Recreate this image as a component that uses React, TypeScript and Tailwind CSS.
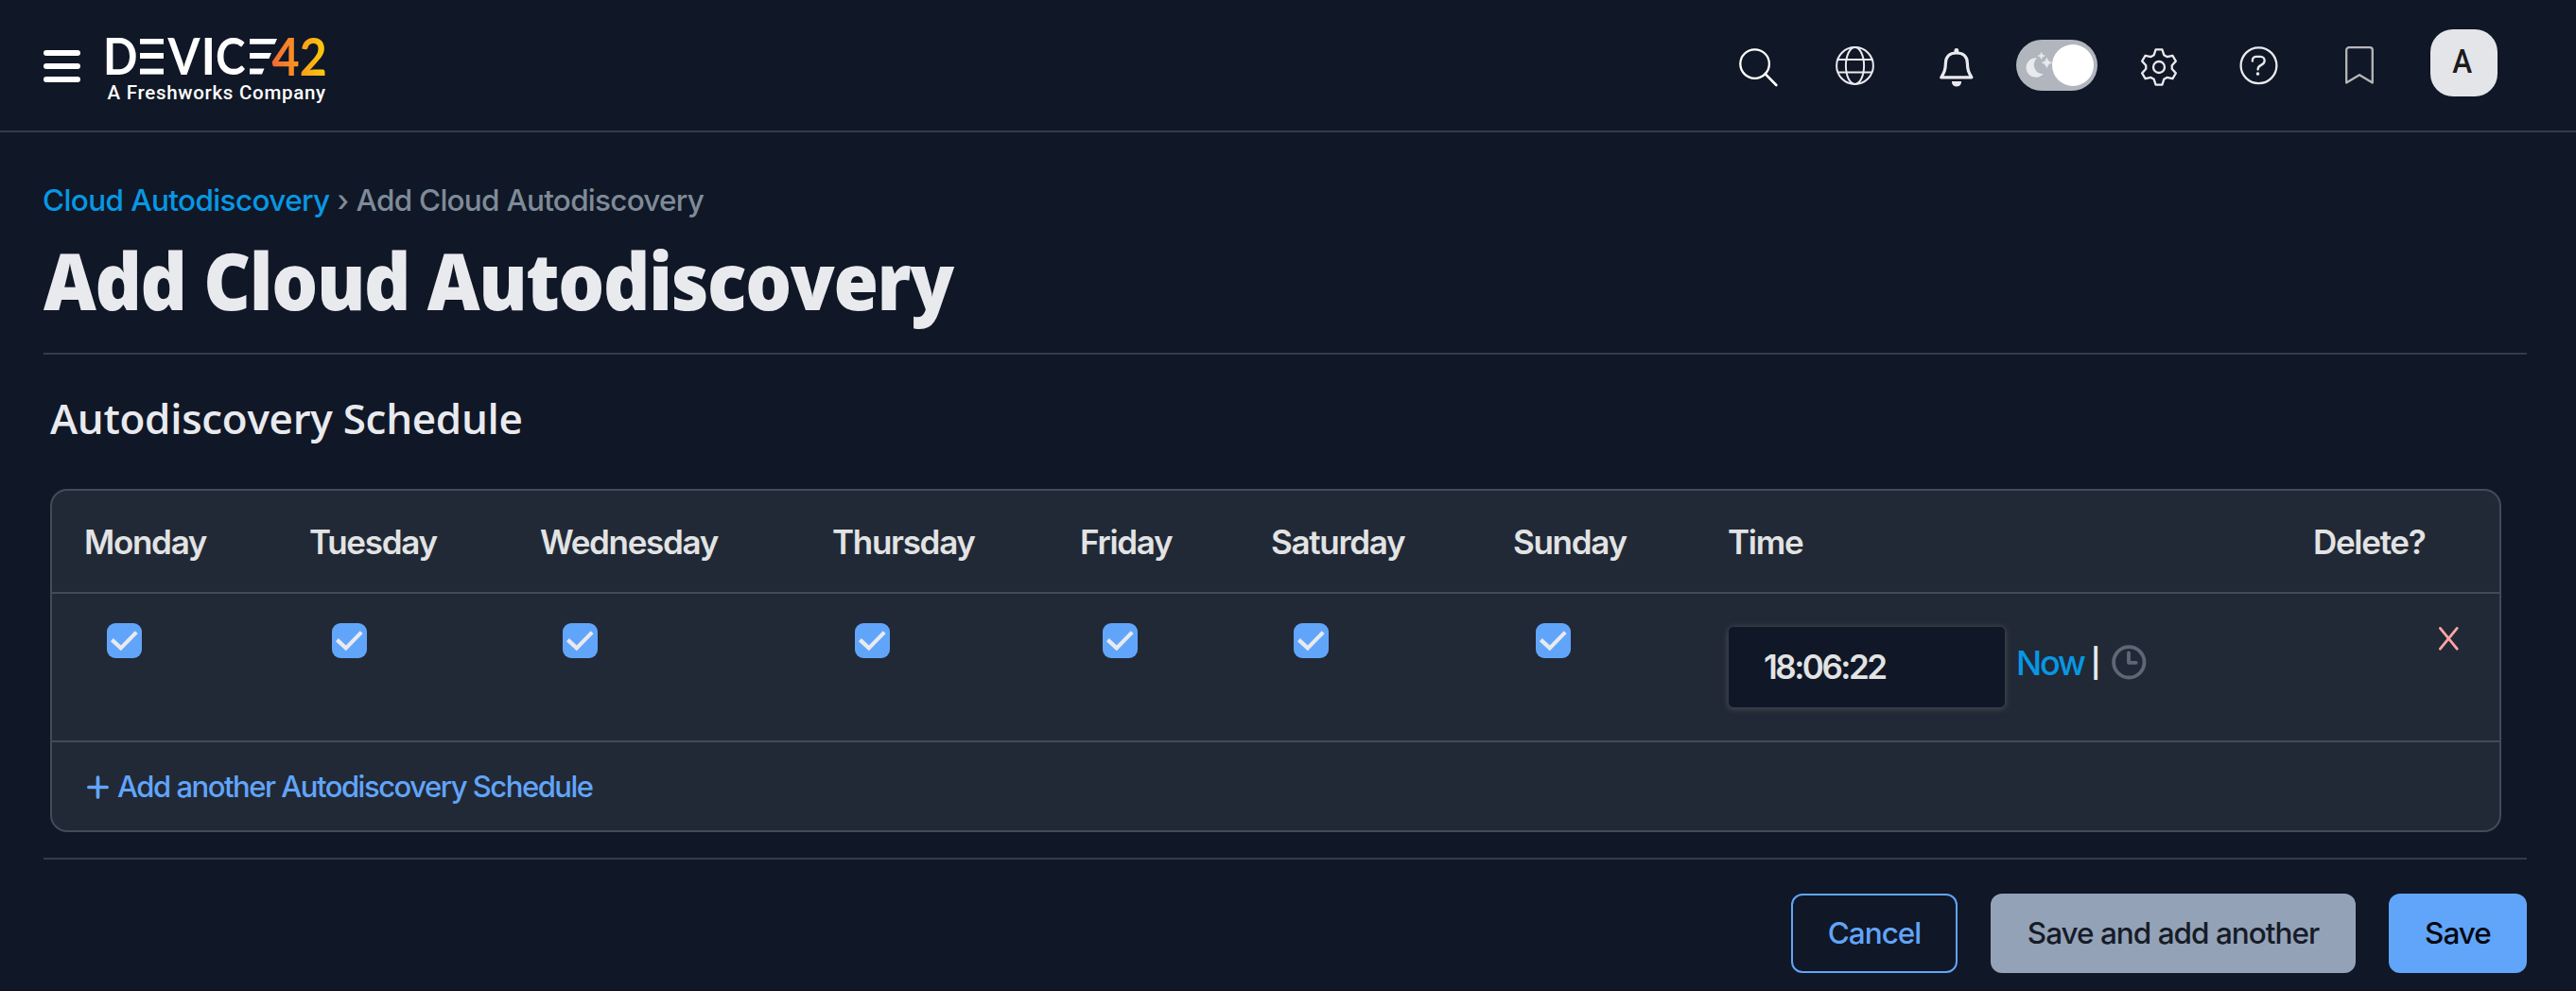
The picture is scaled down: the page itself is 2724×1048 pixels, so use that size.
import type { ReactNode } from 'react';

const DAYS = ['Monday', 'Tuesday', 'Wednesday', 'Thursday', 'Friday', 'Saturday', 'Sunday'];

const COLUMNS = 'grid grid-cols-[238px_244px_309px_262px_202px_256px_227px_619px_1fr] pl-[34px]';

function gearPath() {
  const tooth = [
    [-5.3, -12.8],
    [-3.4, -18.6],
    [3.4, -18.6],
    [5.3, -12.8],
  ];
  const points: string[] = [];
  for (let i = 0; i < 6; i++) {
    const a = (i * Math.PI) / 3;
    for (const [x, y] of tooth) {
      const px = x * Math.cos(a) - y * Math.sin(a);
      const py = x * Math.sin(a) + y * Math.cos(a);
      points.push(`${px.toFixed(2)} ${py.toFixed(2)}`);
    }
  }
  return `M${points.join('L')}Z`;
}

function Logo() {
  return (
    <svg width="234" height="72" viewBox="0 0 234 72" className="ml-7 overflow-visible" role="img" aria-label="Device42">
      <defs>
        <linearGradient id="brand" gradientUnits="userSpaceOnUse" x1="176" y1="20" x2="231" y2="20">
          <stop offset="0" stopColor="#f26a36" />
          <stop offset="0.5" stopColor="#f9981f" />
          <stop offset="1" stopColor="#fecb0a" />
        </linearGradient>
      </defs>
      <g fill="#fff" fontFamily="Lato, sans-serif" fontWeight="700" fontSize="53">
        <text x="-4" y="41" textLength="36.5" lengthAdjust="spacingAndGlyphs">D</text>
        <rect x="35" y="3" width="25" height="5.7" />
        <rect x="35" y="18" width="25" height="6" />
        <rect x="35" y="34.6" width="25" height="6" />
        <text x="64.5" y="41" textLength="34" lengthAdjust="spacingAndGlyphs">V</text>
        <text x="99.5" y="41">I</text>
        <text x="115" y="41" textLength="31.5" lengthAdjust="spacingAndGlyphs">C</text>
        <path d="M151 3H180L177.5 8.7H151ZM151 18H174L171.5 24H151ZM151 34.6H166.5L164 40.6H151Z" />
      </g>
      <g fill="url(#brand)" fontFamily="Lato, sans-serif" fontWeight="700" fontSize="56">
        <text x="174.5" y="41.5" textLength="29.2" lengthAdjust="spacingAndGlyphs">4</text>
        <text x="203.7" y="41.5" textLength="29" lengthAdjust="spacingAndGlyphs">2</text>
      </g>
      <text x="0.6" y="67" fill="#fff" fontFamily="Roboto, sans-serif" fontWeight="500" fontSize="20.5" textLength="230.5">
        A Freshworks Company
      </text>
    </svg>
  );
}

function Header() {
  return (
    <header className="flex h-[140px] items-center border-b-2 border-[#343b49] pr-[83px] pl-[46px]">
      <button className="mt-0.5 flex w-[39px] flex-col gap-2" aria-label="Menu">
        <span className="h-1.5 rounded-full bg-white" />
        <span className="h-1.5 rounded-full bg-white" />
        <span className="h-1.5 rounded-full bg-white" />
      </button>
      <div className="mt-[10px]">
        <Logo />
      </div>
      <nav className="ml-auto flex h-full items-center text-[#e9eaee]" aria-label="Toolbar">
        <svg width="41" height="41" viewBox="0 0 41 41" fill="none" stroke="#fff" strokeWidth="2.3" strokeLinecap="round" className="mt-1">
          <circle cx="16.6" cy="16.6" r="15.3" />
          <path d="M27.6 27.2L39.3 39" strokeWidth="2.6" />
        </svg>
        <svg width="41" height="41" viewBox="0 0 41 41" fill="none" stroke="currentColor" strokeWidth="2" className="ml-[61px]">
          <circle cx="20.5" cy="20.5" r="19.4" />
          <ellipse cx="20.5" cy="20.5" rx="9.6" ry="19.4" />
          <path d="M2 14H39M2 27.6H39" />
        </svg>
        <svg width="36" height="41" viewBox="0 0 36 41" fill="none" stroke="currentColor" strokeWidth="3.2" strokeLinejoin="round" className="mt-1 ml-[69px]">
          <path d="M1.8 30.8H33.9C30.6 25.5 29.6 23 29.4 16C29.2 8.5 24.8 5 17.9 5S6.6 8.5 6.4 16C6.2 23 5 25.5 1.8 30.8Z" />
          <path d="M13 35H23V36A5 4.5 0 0 1 13 36ZM15.4 5V2.5A2.4 2.4 0 0 1 20.3 2.5V5Z" fill="currentColor" stroke="none" />
        </svg>
        <div className="ml-[45px] flex h-[54px] w-[86px] items-center justify-between rounded-full bg-[#b1b5bd] pr-1 pl-[10px]" role="switch" aria-checked="true">
          <svg width="28" height="28" viewBox="10 12 28 28" fill="currentColor">
            <path d="M22 18.2A10.3 10.3 0 1 0 28.6 35.2A9.8 9.8 0 0 1 22 18.2Z" />
            <path d="M26.7 12.4Q27 15.7 30.3 16Q27 16.3 26.7 19.6Q26.4 16.3 23.1 16Q26.4 15.7 26.7 12.4ZM32.4 18.2Q33.2 22.5 37.5 23.3Q33.2 24.1 32.4 28.4Q31.6 24.1 27.3 23.3Q31.6 22.5 32.4 18.2Z" stroke="currentColor" strokeWidth="0.8" />
          </svg>
          <span className="size-11 rounded-full bg-white" />
        </div>
        <svg width="40" height="40" viewBox="-20 -20 40 40" fill="none" stroke="currentColor" strokeWidth="2.3" strokeLinejoin="round" className="mt-1 ml-[45px]">
          <path d={gearPath()} />
          <circle r="6" />
        </svg>
        <svg width="41" height="41" viewBox="0 0 41 41" fill="none" stroke="currentColor" strokeWidth="2.3" strokeLinecap="round" className="ml-[65px]">
          <circle cx="20.5" cy="20.3" r="18.9" />
          <path d="M13.9 15.7V14.6A4 4 0 0 1 17.9 10.8H22.4A4.3 4.3 0 0 1 26.7 15C26.7 18 25.4 18.8 23 19.9C20.6 21 19.6 21.7 19.6 24.6" />
          <circle cx="19.5" cy="29.1" r="1.8" fill="currentColor" stroke="none" />
        </svg>
        <svg width="30" height="40" viewBox="0 0 30 40" fill="none" stroke="#b7b7b8" strokeWidth="2.3" strokeLinejoin="round" className="ml-[71px]">
          <path d="M1.2 38.5V4A2.8 2.8 0 0 1 4 1.2H26A2.8 2.8 0 0 1 28.8 4V38.5L15 30.2Z" />
        </svg>
        <div className="mb-[5px] ml-[60px] flex size-[71px] items-center justify-center rounded-[24px] bg-[#e4e5e9] font-[Roboto,sans-serif] text-[35px] font-medium text-[#1b1b1c]">
          <span className="-ml-[3px] scale-x-90">A</span>
        </div>
      </nav>
    </header>
  );
}

function Checkbox() {
  return (
    <span className="ml-6 flex size-[37px] items-center justify-center rounded-[9px] bg-[#61a5fa]" role="checkbox" aria-checked="true">
      <svg width="37" height="37" viewBox="0 0 37 37" fill="none" stroke="#e9eaee" strokeWidth="4.2">
        <path d="M5.4 17.6L14.8 26.4L31.2 9.6" />
      </svg>
    </span>
  );
}

function HeaderCell({ children }: { children: ReactNode }) {
  return <div className="text-[35px] leading-[44px] font-semibold tracking-[-1.3px] text-[#e2e3e4]">{children}</div>;
}

function ScheduleCard() {
  return (
    <section className="mt-[45px] mr-[27px] ml-[7px] h-[363px] rounded-[18px] border-2 border-[#434b59] bg-[#212936]">
      <div className={`${COLUMNS} h-[109px] items-center border-b-2 border-[#434b59]`}>
        {DAYS.map((day) => (
          <HeaderCell key={day}>{day}</HeaderCell>
        ))}
        <HeaderCell>Time</HeaderCell>
        <HeaderCell>Delete?</HeaderCell>
      </div>

      <div className={`${COLUMNS} h-[157px] items-start border-b-2 border-[#434b59]`}>
        {DAYS.map((day) => (
          <div key={day} className="pt-[31px]">
            <Checkbox />
          </div>
        ))}
        <div className="flex items-center pt-[35px] pl-px text-[36px]">
          <div className="flex h-[85px] w-[292px] items-center rounded-[5px] bg-[#101726] pl-[37px] text-[35px] font-semibold tracking-[-2.5px] text-[#e2e3e4] shadow-[0_1px_6px_1px_#474b53]">
            18:06:22
          </div>
          <a className="mb-[9px] ml-3 font-medium tracking-[-2.2px] text-[#0897e3]">Now</a>
          <span className="mb-[9px] ml-[7px] text-[30px] font-semibold text-[#e9eaee]">|</span>
          <svg width="37" height="37" viewBox="0 0 37 37" fill="none" stroke="#5d6877" strokeWidth="3.8" className="mb-[10px] ml-[12px]">
            <circle cx="18.3" cy="18.3" r="16.2" />
            <path d="M18 8.5V18.8H25.7" strokeLinecap="round" strokeLinejoin="round" />
          </svg>
        </div>
        <div className="pt-[35px] pl-[133px]">
          <svg width="21" height="25" viewBox="0 0 21 25" fill="none" stroke="#fda4a4" strokeWidth="2.8" strokeLinecap="round">
            <path d="M1.4 1.4L19.2 23.2M19.2 1.4L1.4 23.2" />
          </svg>
        </div>
      </div>

      <a className="flex h-[95px] items-center gap-[9px] pl-[37px] text-[#61a5fa]">
        <svg width="23" height="25" viewBox="0 0 23 25" stroke="currentColor" strokeWidth="3.7" strokeLinecap="round">
          <path d="M11.5 2V23M1.9 12.5H21.1" />
        </svg>
        <span className="text-[31px] font-medium tracking-[-1.48px]">Add another Autodiscovery Schedule</span>
      </a>
    </section>
  );
}

export default function App() {
  return (
    <div className="h-[1048px] w-full overflow-hidden border-b border-[#130e20] bg-[#101726] font-[Inter,sans-serif]">
      <Header />
      <main className="pr-[52px] pl-[46px]">
        <nav className="mt-[52px] flex h-10 items-center text-[31.5px] font-medium tracking-[-0.62px] text-[#7e8b98]" aria-label="Breadcrumb">
          <a className="-ml-px text-[#0897e3]">Cloud Autodiscovery</a>
          <span className="mx-[8px]">›</span>
          <span className="tracking-[-0.75px]">Add Cloud Autodiscovery</span>
        </nav>
        <h1 className="mt-[14px] border-b-2 border-[#343b49] pb-[27px] font-['Open_Sans',sans-serif] text-[83px] leading-[100px] font-extrabold tracking-[-1.5px] whitespace-nowrap text-[#e9eaee]">
          <span className="inline-block origin-left scale-x-[0.927]">Add Cloud Autodiscovery</span>
        </h1>
        <h2 className="mt-[37px] ml-[7px] font-['Open_Sans',sans-serif] text-[44px] leading-[60px] font-semibold tracking-[-0.3px] text-[#e9eaee]">
          Autodiscovery Schedule
        </h2>
        <ScheduleCard />
        <div className="mt-[27px] flex justify-end gap-[35px] border-t-2 border-[#343b49] pt-9 text-[31.5px] font-medium tracking-[-1px]">
          <button className="h-[84px] w-[176px] rounded-xl border-2 border-[#61a5fa] text-[#61a5fa]">Cancel</button>
          <button className="h-[84px] w-[386px] rounded-xl bg-[#94a2b8] text-[#161c27]">Save and add another</button>
          <button className="h-[84px] w-[146px] rounded-xl bg-[#61a5fa] text-[#05080f]">Save</button>
        </div>
      </main>
    </div>
  );
}
